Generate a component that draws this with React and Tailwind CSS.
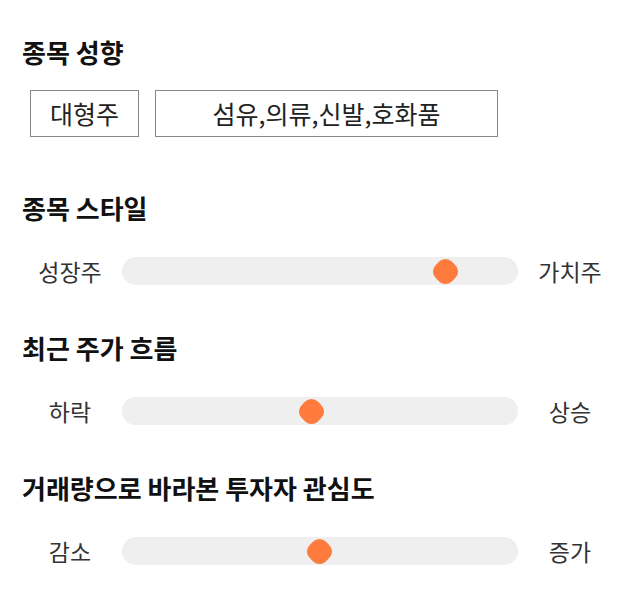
const font = { fontFamily: '"Noto Sans CJK KR", "Noto Sans", sans-serif' };

const sliders = [
  { title: "종목 스타일", left: "성장주", right: "가치주", pos: 323 },
  { title: "최근 주가 흐름", left: "하락", right: "상승", pos: 189 },
  { title: "거래량으로 바라본 투자자 관심도", left: "감소", right: "증가", pos: 197 },
];

function Heading({ children }) {
  return (
    <h2 className="pl-[22px] h-[32px] leading-[32px] text-[26px] font-bold text-[#111]">
      {children}
    </h2>
  );
}

function SliderRow({ left, right, pos }) {
  return (
    <div className="flex items-center pl-[20px] h-[30px]">
      <div className="w-[100px] text-center text-[23px] text-[#333]">{left}</div>
      <div className="relative ml-[2px] w-[396px] h-[28px] rounded-full bg-[#efefef]">
        {/* thumb, placed from its value */}
        <div
          className="absolute top-[14px] w-[23px] h-[23px] -ml-[11.5px] -mt-[11.5px] rotate-45 rounded-[9px] bg-[#ff7a3d]"
          style={{ left: pos }}
        />
      </div>
      <div className="ml-[2px] w-[100px] text-center text-[23px] text-[#333]">{right}</div>
    </div>
  );
}

export default function App() {
  return (
    <div className="w-[640px] h-[606px] bg-white pt-[36px]" style={font}>
      <Heading>종목 성향</Heading>
      <div className="flex gap-[16px] ml-[30px] mt-[22px]">
        <div className="w-[109px] h-[47px] border border-[#888] flex items-center justify-center text-[25px] text-[#222]">
          대형주
        </div>
        <div className="w-[343px] h-[47px] border border-[#888] flex items-center justify-center text-[25px] text-[#222]">
          섬유,의류,신발,호화품
        </div>
      </div>

      {sliders.map((s, i) => (
        <div key={s.title} className={i === 0 ? "mt-[55px]" : "mt-[46px]"}>
          <Heading>{s.title}</Heading>
          <div className="mt-[32px]">
            <SliderRow left={s.left} right={s.right} pos={s.pos} />
          </div>
        </div>
      ))}
    </div>
  );
}
